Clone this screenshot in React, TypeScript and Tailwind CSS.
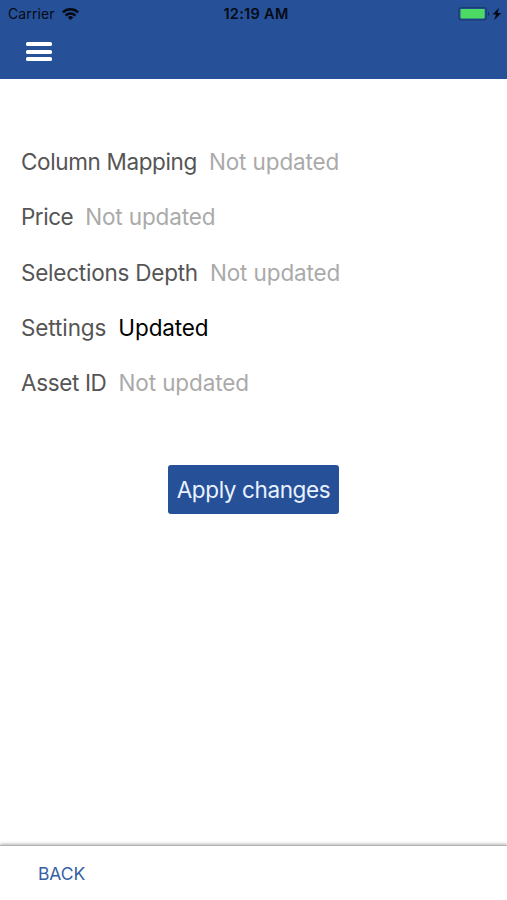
import React from 'react';

interface SyncItem {
  label: string;
  updated: boolean;
  tracking: string;
}

const items: SyncItem[] = [
  { label: 'Column Mapping', updated: false, tracking: 'tracking-[-0.37px]' },
  { label: 'Price', updated: false, tracking: 'tracking-[-0.5px]' },
  { label: 'Selections Depth', updated: false, tracking: 'tracking-[-0.23px]' },
  { label: 'Settings', updated: true, tracking: 'tracking-[-0.1px]' },
  { label: 'Asset ID', updated: false, tracking: 'tracking-[-0.36px]' },
];

const WifiIcon: React.FC = () => (
  <svg className="w-[17px] h-3" viewBox="0 0 17 12" fill="none" stroke="#050a14" strokeWidth="2.5">
    <path d="M0.9 4.4a10.9 10.9 0 0 1 15.2 0" />
    <path d="M3.6 7.6a6.9 6.9 0 0 1 9.8 0" />
    <path d="M8.5 12L5.8 9.4a3.9 3.9 0 0 1 5.4 0z" fill="#050a14" stroke="none" />
  </svg>
);

const BatteryIcon: React.FC = () => (
  <svg className="w-[45px] h-[14px]" viewBox="0 0 45 14">
    <rect x="0.9" y="0.6" width="27.4" height="12.2" rx="2" fill="none" stroke="#1b3c70" strokeWidth="1.2" />
    <rect x="2.5" y="2" width="24.2" height="9.4" rx="0.8" fill="#4cd964" />
    <path d="M30 4.8c1.6.6 1.6 3.4 0 4z" fill="#142c57" />
    <path d="M41 0.8l-6.4 6.8h3.5l-1.9 5.4L43.4 6h-3.8z" fill="#050a14" />
  </svg>
);

const StatusBar: React.FC = () => (
  <div className="grid grid-cols-3 items-center h-[27px] pl-2 pr-[4px] text-[14px] leading-none text-[#050a14]">
    <div className="flex items-center gap-[7px]">
      <span className="tracking-[0.1px]">Carrier</span>
      <WifiIcon />
    </div>
    <span className="text-center pt-px pl-px text-[14.5px] font-semibold tracking-[0.3px]">12:19 AM</span>
    <div className="flex justify-end">
      <BatteryIcon />
    </div>
  </div>
);

const App: React.FC = () => {
  return (
    <div className="flex flex-col h-[900px] w-full bg-white font-['Inter',sans-serif]">
      <header className="h-[79px] shrink-0 bg-[#265199]">
        <StatusBar />
        <button className="flex flex-col gap-[3.5px] ml-[26px] mt-[15px]" aria-label="Menu">
          <span className="w-[26px] h-1 rounded-[1.5px] bg-white" />
          <span className="w-[26px] h-1 rounded-[1.5px] bg-white" />
          <span className="w-[26px] h-1 rounded-[1.5px] bg-white" />
        </button>
      </header>

      <main className="flex-1 flex flex-col pt-[55px]">
        <ul className="px-[21px] text-[22.5px]">
          {items.map((item) => (
            <li key={item.label} className="flex items-center gap-3 h-[55.4px]">
              <span className={`text-[#555555] ${item.tracking}`}>{item.label}</span>
              <span className={`tracking-[-0.12px] ${item.updated ? 'text-black' : 'text-[#aaaaaa]'}`}>
                {item.updated ? 'Updated' : 'Not updated'}
              </span>
            </li>
          ))}
        </ul>
        <button className="self-center mt-[54px] w-[171px] h-[49px] rounded-[3px] bg-[#265199] text-[22.5px] tracking-[-0.38px] text-[#eaf2ff] whitespace-nowrap">
          Apply changes
        </button>
      </main>

      <footer className="h-[55px] shrink-0 flex items-center pt-0.5 pl-[38px] border-t border-[#b4b4b4] shadow-[0_-1px_3px_rgba(0,0,0,0.3)]">
        <button className="text-[17.5px] tracking-[-0.1px] text-[#3560a5]">BACK</button>
      </footer>
    </div>
  );
};

export default App;
